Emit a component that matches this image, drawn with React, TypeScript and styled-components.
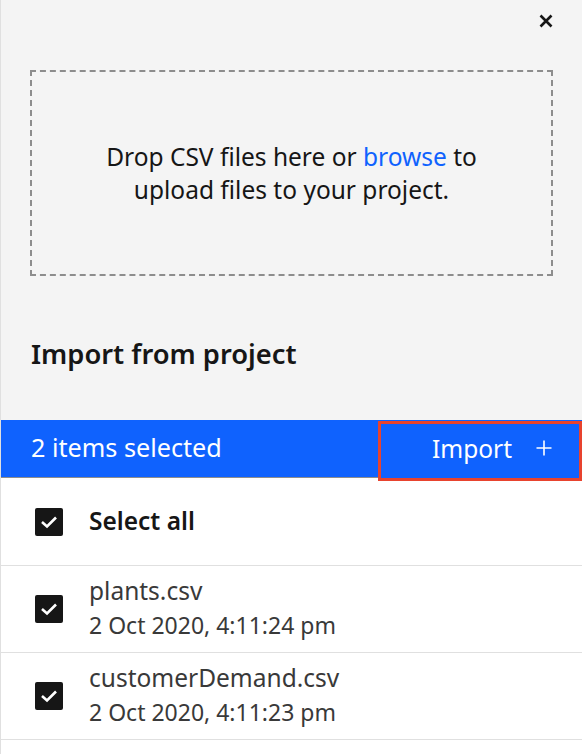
import styled, { createGlobalStyle } from "styled-components";

const GlobalStyle = createGlobalStyle`
  html, body {
    margin: 0;
    padding: 0;
    background: #ffffff;
  }
  body {
    font-family: "Noto Sans", "Liberation Sans", sans-serif;
    color: #161616;
  }
`;

type FileItem = {
  name: string;
  modified: string;
};

const files: FileItem[] = [
  { name: "plants.csv", modified: "2 Oct 2020, 4:11:24 pm" },
  { name: "customerDemand.csv", modified: "2 Oct 2020, 4:11:23 pm" },
];

const Panel = styled.div`
  width: 582px;
  height: 754px;
  box-sizing: border-box;
  border-left: 1px solid #e0e0e0;
  overflow: hidden;
  background: #ffffff;
`;

const Top = styled.section`
  background: #f4f4f4;
  height: 420px;
  box-sizing: border-box;
  display: flex;
  flex-direction: column;
  padding: 10px 29px 0 29px;
`;

const CloseRow = styled.div`
  display: flex;
  justify-content: flex-end;
  height: 22px;
  margin-right: -4px;
`;

const CloseButton = styled.button`
  border: 0;
  background: none;
  padding: 0;
  width: 22px;
  height: 22px;
  display: flex;
  align-items: center;
  justify-content: center;
  color: #161616;
  cursor: pointer;
`;

const DropZone = styled.div`
  margin-top: 38px;
  height: 206px;
  border: 2px dashed #8d8d8d;
  box-sizing: border-box;
  display: flex;
  align-items: center;
  justify-content: center;
  text-align: center;
  font-size: 24.5px;
  line-height: 33px;
  color: #161616;
  padding: 0 20px;
`;

const Link = styled.a`
  color: #0f62fe;
  text-decoration: none;
`;

const Title = styled.h2`
  margin: 62px 0 0 1px;
  font-size: 27.3px;
  font-weight: 600;
  line-height: 32px;
  color: #161616;
`;

const ActionBar = styled.div`
  height: 57px;
  background: #0f62fe;
  border-bottom: 1px solid #8d8d8d;
  display: flex;
  align-items: flex-start;
  justify-content: space-between;
  padding-left: 30px;
`;

const SelectedCount = styled.span`
  color: #ffffff;
  font-size: 25.2px;
  line-height: 55px;
`;

const ImportButton = styled.button`
  position: relative;
  margin-top: 1px;
  width: 204px;
  height: 60px;
  box-sizing: border-box;
  border: 3px solid #e8432e;
  background: #0f62fe;
  color: #ffffff;
  font-family: inherit;
  font-size: 24.5px;
  display: flex;
  align-items: center;
  justify-content: flex-end;
  gap: 24px;
  padding: 0 27px 6px 0;
  cursor: pointer;
`;

const Row = styled.label<{ $head?: boolean }>`
  display: flex;
  align-items: center;
  gap: 26px;
  height: ${(p) => (p.$head ? "88px" : "87px")};
  box-sizing: border-box;
  padding-left: 34px;
  border-bottom: 1px solid #e0e0e0;
`;

const Box = styled.span`
  width: 28px;
  height: 28px;
  border-radius: 2px;
  background: #161616;
  display: flex;
  align-items: center;
  justify-content: center;
  flex-shrink: 0;
`;

const HeadLabel = styled.span`
  font-size: 24.5px;
  font-weight: 600;
  color: #161616;
  margin-top: -3px;
`;

const FileInfo = styled.div`
  display: flex;
  flex-direction: column;
  gap: 6px;
  margin-top: -2px;
`;

const FileName = styled.span`
  font-size: 24.5px;
  line-height: 28px;
  color: #393939;
`;

const FileDate = styled.span`
  font-size: 23px;
  line-height: 28px;
  color: #393939;
`;

const Check = () => (
  <Box>
    <svg width="18" height="14" viewBox="0 0 18 14">
      <path d="M2 7 L7 11.5 L16 2.5" fill="none" stroke="#ffffff" strokeWidth="2.6" />
    </svg>
  </Box>
);

export default function App() {
  return (
    <>
      <GlobalStyle />
      <Panel>
        <Top>
          <CloseRow>
            <CloseButton aria-label="Close">
              <svg width="14" height="14" viewBox="0 0 14 14">
                <path d="M1.5 1.5 L12.5 12.5 M12.5 1.5 L1.5 12.5" stroke="#161616" strokeWidth="2.6" />
              </svg>
            </CloseButton>
          </CloseRow>
          <DropZone>
            <span>
              Drop CSV files here or <Link href="#">browse</Link> to
              <br />
              upload files to your project.
            </span>
          </DropZone>
          <Title>Import from project</Title>
        </Top>
        <ActionBar>
          <SelectedCount>2 items selected</SelectedCount>
          <ImportButton>
            Import
            <svg width="16" height="16" viewBox="0 0 16 16">
              <path d="M8 0.5 V15.5 M0.5 8 H15.5" stroke="#ffffff" strokeWidth="1.6" />
            </svg>
          </ImportButton>
        </ActionBar>
        <Row $head>
          <Check />
          <HeadLabel>Select all</HeadLabel>
        </Row>
        {files.map((f) => (
          <Row key={f.name}>
            <Check />
            <FileInfo>
              <FileName>{f.name}</FileName>
              <FileDate>{f.modified}</FileDate>
            </FileInfo>
          </Row>
        ))}
      </Panel>
    </>
  );
}
